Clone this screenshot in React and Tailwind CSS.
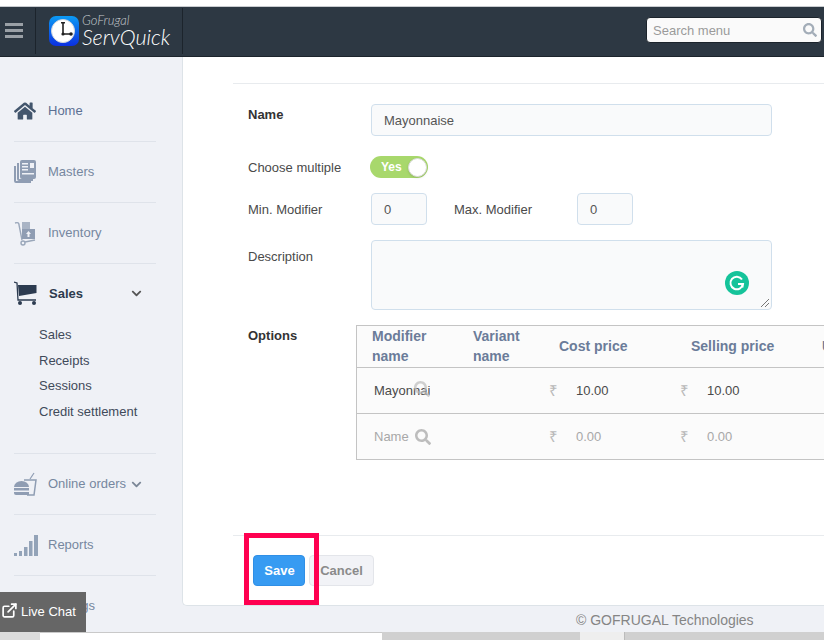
import React from "react";
import { FaHome, FaSearch, FaChevronDown } from "react-icons/fa";
import { ExternalLink } from "lucide-react";

const Masters = () => (
  <svg width="22" height="24" viewBox="0 0 22 24" className="shrink-0">
    <path d="M0 6h2v15h15v2H2a2 2 0 0 1-2-2z" fill="#8f9db3" />
    <path d="M3 3h2v16h14v2H5a2 2 0 0 1-2-2z" fill="#8f9db3" />
    <rect x="6" y="0" width="16" height="19" rx="2" fill="#8f9db3" />
    <rect x="8" y="3" width="6" height="1.5" fill="#eff1f6" />
    <rect x="8" y="6" width="6" height="1.5" fill="#eff1f6" />
    <rect x="8" y="9" width="6" height="1.5" fill="#eff1f6" />
    <rect x="8" y="13" width="12" height="1.5" fill="#eff1f6" />
    <rect x="16" y="3" width="4" height="5" fill="#eff1f6" />
  </svg>
);

const Inventory = () => (
  <svg width="22" height="25" viewBox="0 0 22 25" className="shrink-0">
    <path d="M1 2c3-1 4 0 4 2l3 15" fill="none" stroke="#9aa7ba" strokeWidth="1.4" />
    <circle cx="9" cy="22" r="2" fill="none" stroke="#9aa7ba" strokeWidth="1.4" />
    <path d="M11 21l10-2" stroke="#9aa7ba" strokeWidth="1.4" />
    <rect x="8" y="8" width="13" height="10" fill="#8f9db3" />
    <rect x="8" y="1" width="8" height="7" fill="#a9b4c5" />
    <path d="M14.5 10l2.5 3h-1.500v3h-2v-3H12z" fill="#eff1f6" />
  </svg>
);

const Cart = () => (
  <svg width="24" height="24" viewBox="0 0 24 24" className="shrink-0">
    <path d="M0 1l3 1 1 17h18" fill="none" stroke="#2c3b50" strokeWidth="1.300" />
    <path d="M4 4h18.500v8L5 15z" fill="#2c3b50" />
    <circle cx="6" cy="22" r="2" fill="#2c3b50" />
    <circle cx="20" cy="22" r="2" fill="#2c3b50" />
  </svg>
);

const Food = () => (
  <svg width="23" height="24" viewBox="0 0 23 24" className="shrink-0">
    <path d="M10 8h12l-2 15h-7" fill="none" stroke="#8f9db3" strokeWidth="1.500" />
    <path d="M16 7l4-6" stroke="#8f9db3" strokeWidth="1.200" />
    <path d="M0 15a7.500 6 0 0 1 15 0z" fill="#8f9db3" />
    <rect x="0" y="16" width="15" height="2.500" fill="#8f9db3" />
    <path d="M0 20h15v3H2a2 2 0 0 1-2-2z" fill="#8f9db3" />
  </svg>
);

const Bars = () => (
  <svg width="24" height="21" viewBox="0 0 24 21" className="shrink-0">
    <rect x="0" y="18" width="3" height="3" fill="#93a3b8" />
    <rect x="5" y="16" width="3" height="5" fill="#93a3b8" />
    <rect x="10" y="12" width="3.500" height="9" fill="#93a3b8" />
    <rect x="15" y="6" width="3.500" height="15" fill="#93a3b8" />
    <rect x="20" y="0" width="4" height="21" fill="#93a3b8" />
  </svg>
);

const Logo = () => (
  <svg width="30" height="30" viewBox="0 0 30 30" className="shrink-0">
    <defs>
      <linearGradient id="lg" x1="0" y1="0" x2="0" y2="1">
        <stop offset="0" stopColor="#0b9bf5" />
        <stop offset="1" stopColor="#0b2fe0" />
      </linearGradient>
    </defs>
    <rect width="30" height="30" rx="7" fill="url(#lg)" />
    <circle cx="14" cy="15" r="11.500" fill="#fff" />
    <circle cx="14" cy="15" r="11.500" fill="none" stroke="#cfd6de" strokeWidth="1" />
    <path d="M14 7v11h7" stroke="#222" strokeWidth="1.600" fill="none" />
    <rect x="12" y="6" width="4" height="1.500" fill="#222" />
    <circle cx="14" cy="18" r="1.600" fill="#222" />
    <circle cx="22" cy="18" r="1.800" fill="#222" />
  </svg>
);

const Grammarly = () => (
  <svg width="24" height="24" viewBox="0 0 24 24" className="absolute right-[22px] bottom-[14px]">
    <circle cx="12" cy="12" r="12" fill="#15c39a" />
    <path d="M17 8.500A6.300 6.300 0 1 0 18 13h-5" fill="none" stroke="#fff" strokeWidth="2" />
    <path d="M17.500 13v3.500" stroke="#fff" strokeWidth="2" />
  </svg>
);

const Divider = () => <div className="h-px bg-[#dfe3ea]" />;

const NavItem = ({ icon, label, text = "text-[#76879f]", chevron, className = "h-[60px]" }) => (
  <div className={`flex items-center text-[13px] ${text} ${className}`}>
    <span className="flex w-[34px] shrink-0">{icon}</span>
    <span>{label}</span>
    {chevron}
  </div>
);

const Field = ({ className = "", children }) => (
  <div className={`flex items-center rounded-[4px] border border-[#d0dfec] bg-[#f9fafb] pl-3 pt-[2px] text-[13px] text-[#555] ${className}`}>
    {children}
  </div>
);

const Rupee = ({ className = "" }) => <span className={`mt-[2px] text-[15px] leading-[16px] text-[#b9b9b9] ${className}`}>₹</span>;

export default function App() {
  return (
    <div className="flex h-[640px] w-[824px] flex-col overflow-hidden bg-[#eff1f6] font-['Liberation_Sans',Arial,sans-serif] relative">
      <div className="h-[7px] shrink-0 border-b border-[#c9ccd0] bg-white" />

      <header className="flex h-[50px] shrink-0 items-center border-b border-[#1c242c] bg-[#2d3843]">
        <div className="mb-[2px] flex h-[46px] w-[36px] shrink-0 items-center border-r border-[#1c242c] pl-[5px]">
          <svg width="18" height="15" viewBox="0 0 18 15">
            <rect width="18" height="3" fill="#9aa0a6" />
            <rect y="6" width="18" height="3" fill="#9aa0a6" />
            <rect y="12" width="18" height="3" fill="#9aa0a6" />
          </svg>
        </div>
        <div className="mb-[2px] flex h-[46px] w-[147px] shrink-0 items-center border-r border-[#1c242c] pl-[13px]">
          <Logo />
          <div className="ml-[3px] flex flex-col font-['Lato',sans-serif] italic text-white">
            <span className="text-[13px] font-light leading-[12px] text-[#c4c8cc]">GoFrugal</span>
            <span className="text-[21.500px] font-light leading-[22px]">ServQuick</span>
          </div>
        </div>
        <div className="mb-[3px] ml-auto mr-[2px] flex h-[26px] w-[176px] items-center justify-between rounded-[4px] border border-[#1c242c] bg-[#fafafa] pl-[6px] pr-[4px]">
          <span className="pt-[2px] text-[13px] text-[#9a9a9a]">Search menu</span>
          <FaSearch className="text-[14px] text-[#a3adb8]" />
        </div>
      </header>

      <div className="flex min-h-0 flex-1">
        <aside className="w-[182px] shrink-0 pl-[14px] pr-[26px] pt-[24px]">
          <NavItem icon={<FaHome className="text-[22px] text-[#43566d]" />} label="Home" text="text-[#5c7093]" />
          <Divider />
          <NavItem icon={<Masters />} label="Masters" />
          <Divider />
          <NavItem icon={<Inventory />} label="Inventory" />
          <Divider />
          <NavItem
            icon={<Cart />}
            label={<span className="ml-[1px] block pt-[2px] font-bold">Sales</span>}
            text="text-[#2d3b4e]"
            chevron={<FaChevronDown className="ml-auto mr-[14px] text-[11px] text-[#555]" />}
            className="h-[58px]"
          />
          <div className="-mt-[1px] flex h-[132px] flex-col pl-[25px] pt-[1px] text-[13px] leading-[25.500px] text-[#3f4a5a]">
            <span>Sales</span>
            <span>Receipts</span>
            <span>Sessions</span>
            <span>Credit settlement</span>
          </div>
          <Divider />
          <NavItem
            icon={<Food />}
            label="Online orders"
            chevron={<FaChevronDown className="ml-[5px] text-[11px] text-[#7b8797]" />}
          />
          <Divider />
          <NavItem icon={<Bars />} label="Reports" />
          <Divider />
          <NavItem label="Settings" />
        </aside>

        <main className="min-w-0 flex-1 overflow-hidden rounded-bl-[5px] border-b border-l border-[#dde3e8] bg-white pl-[50px] pt-[26px]">
          <div className="h-px bg-[#e8ebee]" />
          <div className="flex h-[451px] flex-col pl-[15px] pr-[52px] pt-[20px] text-[13px] text-[#4a4a4a]">
            <div className="flex">
              <span className="mt-[3px] w-[123px] shrink-0 font-bold leading-[16px] text-[#333]">Name</span>
              <Field className="h-[32px] w-[401px]">Mayonnaise</Field>
            </div>
            <div className="mt-[20px] flex h-[22px] items-center">
              <span className="w-[122px] shrink-0 pt-[2px]">Choose multiple</span>
              <div className="flex h-[22px] w-[58px] items-center justify-between rounded-full bg-[#a8d86c] pl-[11px] pr-[1px]">
                <span className="text-[12px] font-bold text-white">Yes</span>
                <span className="h-[19px] w-[19px] rounded-full border border-[#dcdcdc] bg-white shadow-sm" />
              </div>
            </div>
            <div className="mt-[15px] flex h-[32px] items-center">
              <span className="w-[123px] shrink-0 pt-[2px]">Min. Modifier</span>
              <Field className="h-[32px] w-[56px]">0</Field>
              <span className="ml-[27px] w-[123px] shrink-0 pt-[2px]">Max. Modifier</span>
              <Field className="h-[32px] w-[56px]">0</Field>
            </div>
            <div className="mt-[15px] flex">
              <span className="mt-[9px] w-[123px] shrink-0 leading-[16px]">Description</span>
              <div className="relative h-[70px] w-[401px] rounded-[4px] border border-[#d0dfec] bg-[#f9fafb]">
                <Grammarly />
                <svg width="10" height="10" viewBox="0 0 10 10" className="absolute bottom-[1px] right-[1px]">
                  <path d="M1 9l8-8M5 9l4-4" stroke="#777" strokeWidth="1" />
                </svg>
              </div>
            </div>
            <div className="mt-[15px] flex">
              <span className="mt-[3px] w-[108px] shrink-0 font-bold leading-[16px] text-[#333]">Options</span>
              <div className="w-[600px] shrink-0 border border-[#c4c4c4] bg-[#fbfbfb]">
                <div className="flex h-[42px] items-center border-b border-[#c4c4c4] pb-[2px] text-[14px] font-bold leading-[20px] text-[#6b7c99]">
                  <span className="w-[101px] shrink-0 pl-[15px]">Modifier<br />name</span>
                  <span className="w-[86px] shrink-0 pl-[15px]">Variant<br />name</span>
                  <span className="w-[132px] shrink-0 pl-[15px]">Cost price</span>
                  <span className="w-[131px] shrink-0 pl-[15px]">Selling price</span>
                  <span className="pl-[15px]">Unit</span>
                </div>
                <div className="flex h-[46px] items-center border-b border-[#c4c4c4] text-[#4a4a4a]">
                  <div className="relative w-[101px] shrink-0 pl-[17px]">
                    <span className="block w-[56px] overflow-hidden whitespace-nowrap">Mayonnaise</span>
                    <FaSearch className="absolute left-[57px] top-[0px] text-[16px] text-[#bdbdbd] opacity-70" />
                  </div>
                  <span className="w-[86px] shrink-0" />
                  <div className="flex w-[132px] shrink-0 pl-[5px]"><Rupee className="w-[27px]" />10.00</div>
                  <div className="flex w-[131px] shrink-0 pl-[4px]"><Rupee className="w-[27px]" />10.00</div>
                </div>
                <div className="flex h-[45px] items-center text-[#a8a8a8]">
                  <div className="flex w-[101px] shrink-0 items-center pl-[17px]">
                    <span>Name</span>
                    <FaSearch className="ml-[6px] text-[16px] text-[#bdbdbd]" />
                  </div>
                  <span className="w-[86px] shrink-0" />
                  <div className="flex w-[132px] shrink-0 pl-[5px]"><Rupee className="w-[27px]" />0.00</div>
                  <div className="flex w-[131px] shrink-0 pl-[4px]"><Rupee className="w-[27px]" />0.00</div>
                </div>
              </div>
            </div>
          </div>
          <div className="h-px bg-[#e8ebee]" />
          <div className="flex gap-[4px] pl-[20px] pt-[19px]">
            <button className="h-[31px] w-[52px] rounded-[4px] border border-[#2f8fe6] bg-[#379bf2] pl-[1px] text-[13px] font-bold text-white">Save</button>
            <button className="h-[31px] w-[65px] rounded-[4px] border border-[#e3e5ea] bg-[#f2f3f7] text-[13px] font-bold text-[#8a8a8a]">Cancel</button>
          </div>
        </main>
      </div>

      <footer className="flex h-[26px] shrink-0 items-center justify-start pl-[576px] pt-[2px] text-[14px] text-[#858585]">
        © GOFRUGAL Technologies
      </footer>

      <div className="flex h-[8px] shrink-0 bg-[#d0d0d0]">
        <div className="w-[40px] bg-[#dcdcdc]" />
        <div className="w-[342px] border-t border-[#c9c9c9] bg-white" />
        <div className="ml-[198px] w-[45px] border-r border-[#bbb] bg-[#eeeeee]" />
      </div>

      <div className="absolute left-[244px] top-[533px] h-[72px] w-[75px] border-[5px] border-[#ff0050]" />

      <div className="absolute left-0 top-[592px] flex h-[40px] w-[86px] items-center bg-[#666666] pl-[1px] text-[13px] text-white">
        <ExternalLink size={17} strokeWidth={2.4} className="mr-[3px] -translate-y-[2px]" />
        Live Chat
      </div>
    </div>
  );
}
